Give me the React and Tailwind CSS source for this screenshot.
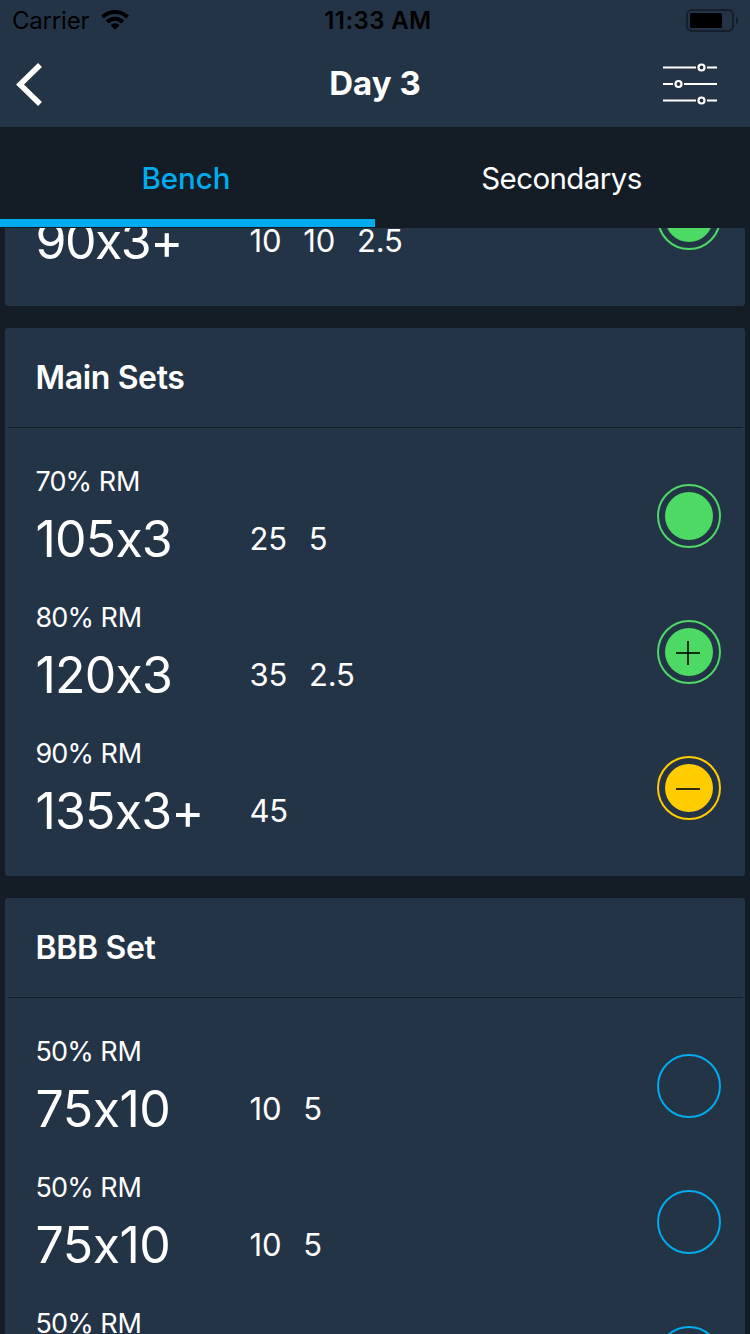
const RING = {
  done: 'border-[#4cd964] text-[#4cd964]',
  plus: 'border-[#4cd964] text-[#4cd964]',
  minus: 'border-[#ffcc00] text-[#ffcc00]',
  open: 'border-[#00aced]',
};

function Status({ kind }) {
  return (
    <div className={`flex size-16 shrink-0 items-center justify-center rounded-full border-2 ${RING[kind]}`}>
      {kind !== 'open' && (
        <svg viewBox="0 0 48 48" className="size-12">
          <circle cx="24" cy="24" r="24" fill="currentColor" />
          {kind !== 'done' && <path d="M11 25h24" stroke="#000" strokeOpacity="0.8" strokeWidth="2" />}
          {kind === 'plus' && <path d="M23 13v24" stroke="#000" strokeOpacity="0.8" strokeWidth="2" />}
        </svg>
      )}
    </div>
  );
}

function SetRow({ percent, weight, plates, status, tracking = 'tracking-[-0.8px]' }) {
  return (
    <div className="flex h-[136px] shrink-0 items-center justify-between pr-6 pl-[30.5px]">
      <div className="flex flex-col gap-[10px] pt-[2px]">
        <div className="h-[34px] text-[27px] leading-[34px] tracking-[-0.1px]">
          {percent && (
            <>
              <span className="tracking-[-0.9px]">{percent}</span> RM
            </>
          )}
        </div>
        <div className="flex h-[60px] items-center">
          <div className={`w-[214px] text-[50px] leading-[60px] ${tracking}`}>{weight}</div>
          <div className="flex gap-[22px] text-[31px] leading-[40px] tracking-[-0.2px]">
            {plates.map((p, i) => (
              <span key={i}>{p}</span>
            ))}
          </div>
        </div>
      </div>
      <Status kind={status} />
    </div>
  );
}

function Card({ title, sets }) {
  return (
    <section className="shrink-0 rounded-[3px] bg-[#243447]">
      <div className="pr-[2px] pl-[3px]">
        <h2 className="h-[100px] border-b border-[#141d26] pl-[27.5px] text-[32px] leading-[100px] font-semibold tracking-[-0.35px]">{title}</h2>
      </div>
      <div className="py-5">
        {sets.map((s, i) => (
          <SetRow key={i} {...s} />
        ))}
      </div>
    </section>
  );
}

const MAIN = [
  { percent: '70%', weight: '105x3', plates: ['25', '5'], status: 'done' },
  { percent: '80%', weight: '120x3', plates: ['35', '2.5'], status: 'plus' },
  { percent: '90%', weight: '135x3+', plates: ['45'], status: 'minus' },
];
const BBB = Array.from({ length: 3 }, () => ({
  percent: '50%',
  weight: '75x10',
  plates: ['10', '5'],
  status: 'open',
  tracking: 'tracking-[-0.5px]',
}));

export default function App() {
  return (
    <div className="flex h-[1334px] w-[750px] flex-col overflow-hidden bg-[#141d26] font-['Inter','Liberation_Sans',sans-serif] text-white">
      <header className="flex h-[127px] shrink-0 flex-col bg-[#243447]">
        <div className="grid h-10 grid-cols-3 items-center pr-[11px] pl-3 text-black">
          <div className="flex items-center gap-[12px]">
            <span className="text-[24px] leading-[41px] tracking-[-0.2px]">Carrier</span>
            <svg width="28" height="21" viewBox="0 0 28 21" className="mb-px">
              <path d="M0 5.700A20 20 0 0 1 28 5.700L25.100 8.600A16 16 0 0 0 2.900 8.600Z" />
              <path d="M4.800 10.500A13 13 0 0 1 23.200 10.500L20.300 13.400A9 9 0 0 0 7.700 13.400Z" />
              <path d="M9.500 15.200A6.400 6.400 0 0 1 18.500 15.200L14 19.700Z" />
            </svg>
          </div>
          <div className="pl-[5px] text-center text-[24px] leading-[41px] font-semibold tracking-[0.4px]">11:33 AM</div>
          <svg width="53" height="24" viewBox="0 0 53 24" className="mb-px justify-self-end">
            <rect x="1" y="2" width="46" height="21" rx="5" fill="none" stroke="#151e2b" strokeWidth="2" />
            <rect x="4" y="5" width="32" height="15" rx="1.5" />
            <path d="M50 8.500c3 1.500 3 6.500 0 8z" fill="#151e2b" />
          </svg>
        </div>
        <div className="grid h-[87px] grid-cols-3 items-center pr-8 pl-4">
          <svg width="26" height="44" viewBox="0 0 26 44">
            <path d="M24 3L4 22.500L24 42" fill="none" stroke="#fff" strokeWidth="5.500" />
          </svg>
          <h1 className="pb-[2px] pl-4 text-center text-[33px] leading-[44px] font-bold">Day 3</h1>
          <svg width="56" height="44" viewBox="0 0 56 44" fill="none" stroke="#fff" strokeWidth="2" className="justify-self-end">
            <path d="M1 5.500h33M45 5.500h10M1 22h10M22 22h33M1 38.500h33M45 38.500h10" />
            <g strokeWidth="2.200">
              <circle cx="39.500" cy="5.500" r="3" />
              <circle cx="16.500" cy="22" r="3" />
              <circle cx="39.500" cy="38.500" r="3" />
            </g>
          </svg>
        </div>
      </header>
      <nav className="grid h-[101px] shrink-0 grid-cols-2 pb-px text-center leading-[40px]">
        <div className="h-[100px] border-b-8 border-[#00aced] pt-[31px] pr-[3px] text-[29.5px] font-medium text-[#00aced]">Bench</div>
        <div className="pt-[31px] pr-[2px] text-[29.5px] tracking-[-0.6px]">Secondarys</div>
      </nav>
      <main className="flex min-h-0 flex-1 flex-col gap-[22px] overflow-hidden px-[5px]">
        <section className="flex h-[78px] shrink-0 flex-col justify-end overflow-hidden rounded-b-[3px] bg-[#243447] pb-5">
          <SetRow weight="90x3+" plates={['10', '10', '2.5']} status="done" tracking="tracking-[-1.5px]" />
        </section>
        <Card title="Main Sets" sets={MAIN} />
        <Card title="BBB Set" sets={BBB} />
      </main>
    </div>
  );
}
